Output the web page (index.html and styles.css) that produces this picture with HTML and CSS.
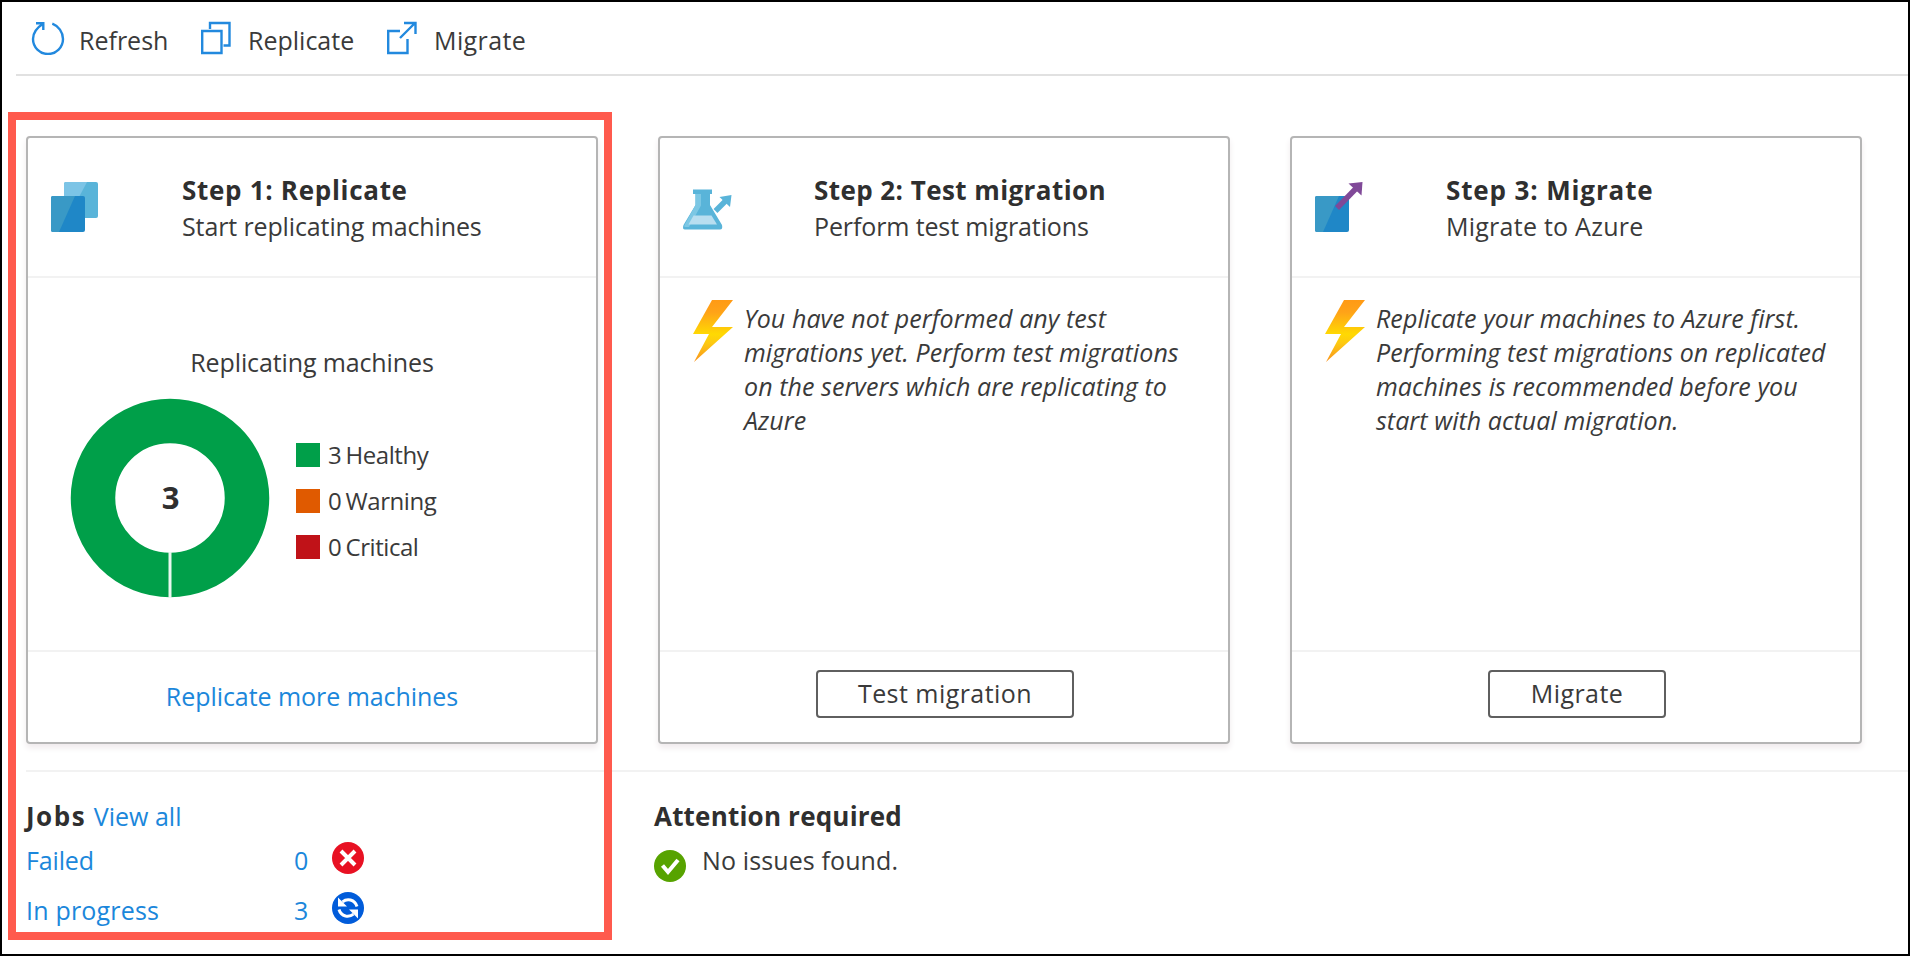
FILE: index.html
```html
<!DOCTYPE html>
<html lang="en">
<head>
<meta charset="utf-8">
<title>Migrate machines</title>
<link rel="stylesheet" href="styles.css">
</head>
<body>
<svg width="0" height="0" class="defs" aria-hidden="true">
  <defs>
    <linearGradient id="bolt-fill" x1="0" y1="0" x2="0" y2="1">
      <stop offset="0" stop-color="#ff9a15"/><stop offset=".2" stop-color="#ffa318"/>
      <stop offset=".55" stop-color="#ffd902"/><stop offset=".7" stop-color="#fdc912"/><stop offset="1" stop-color="#f9931e"/>
    </linearGradient>
    <symbol id="bolt" viewBox="0 0 40 62"><path fill="url(#bolt-fill)" d="M19 0H40L19 27H40L1 62L16 34H0Z"/></symbol>
  </defs>
</svg>
<div class="page">
  <header class="toolbar">
    <button class="tool tool-refresh"><svg class="tool-icon" width="34" height="34" viewBox="0 0 34 34"><path d="M12 2.800C5.500 7 2 12.500 2 18A15 15 0 0 0 32 18C32 11 27.500 5 21.300 2.600M5 2.200H12.300V9"/></svg><span>Refresh</span></button>
    <button class="tool tool-replicate"><svg class="tool-icon" width="30" height="34" viewBox="0 0 30 34"><path d="M1.200 10H20.500V32H1.200ZM9 8V2H28.500V24.500H22.500"/></svg><span>Replicate</span></button>
    <button class="tool tool-migrate"><svg class="tool-icon" width="30" height="34" viewBox="0 0 30 34"><path d="M13 10H1.200V32H20.500V18M13 17L28 2M17 2H28.500V13"/></svg><span>Migrate</span></button>
  </header>
  <main class="content">
    <div class="cards">
      <section class="card">
        <div class="card-head">
          <svg class="step-icon" width="50" height="60" viewBox="0 0 50 60"><rect x="14" y="5" width="34" height="36" rx="2" fill="#59b4d9"/><path fill="#7cc4e6" d="M16 5H37L28 22H14V7Q14 5 16 5Z"/><rect x="1" y="19" width="34" height="36" rx="2" fill="#1f87c7"/><path fill="#3999c6" d="M3 19H25L9 55H3Q1 55 1 53V21Q1 19 3 19Z"/></svg>
          <div><h2 class="title-replicate">Step 1: Replicate</h2><p class="sub-tight">Start replicating machines</p></div>
        </div>
        <div class="card-body chart">
          <p class="chart-title">Replicating machines</p>
          <div class="chart-row">
            <svg class="donut" width="200" height="200" viewBox="0 0 200 200"><circle cx="100" cy="100" r="77" fill="none" stroke="#009f49" stroke-width="44.500"/><path d="M100 154V200" stroke="#e9f7ef" stroke-width="3"/><text class="donut-value" x="100.500" y="111" text-anchor="middle">3</text></svg>
            <ul class="legend"><li><i class="ok"></i><span>3 Healthy</span></li><li><i class="warn"></i><span>0 Warning</span></li><li><i class="crit"></i><span>0 Critical</span></li></ul>
          </div>
        </div>
        <div class="card-foot"><a class="more">Replicate more machines</a></div>
      </section>
      <section class="card">
        <div class="card-head">
          <svg class="step-icon" width="50" height="60" viewBox="0 0 50 60"><path fill="#59b4d9" d="M11 12.500H30V17H28V28L40 48Q41 52.500 38 52.500H3Q0 52.500 1.500 48L13.500 28V17H11Z"/><path fill="#7cc7e4" d="M13.500 17H19V28.500L7 50H3Q1.500 50 2.500 48L13.500 28Z"/><path fill="#b8def0" d="M11.500 38.500H29.500L35 47.500H6.500Z"/><path stroke="#59b4d9" stroke-width="5.500" d="M33.500 34L44 23.500"/><path fill="#59b4d9" d="M37.500 20L49.500 18L48 30Z"/></svg>
          <div><h2 class="title-test">Step 2: Test migration</h2><p class="sub-tight">Perform test migrations</p></div>
        </div>
        <div class="card-body note"><svg class="bolt" width="40" height="62"><use href="#bolt"/></svg><p>You have not performed any test<br>migrations yet. Perform test migrations<br>on the servers which are replicating to<br>Azure</p></div>
        <div class="card-foot"><button class="action action-test">Test migration</button></div>
      </section>
      <section class="card">
        <div class="card-head">
          <svg class="step-icon" width="50" height="60" viewBox="0 0 50 60"><rect x="1" y="19" width="34" height="36" rx="2" fill="#1f87c7"/><path fill="#3999c6" d="M3 19H25L9 55H3Q1 55 1 53V21Q1 19 3 19Z"/><path stroke="#804998" stroke-width="5.500" d="M23 31L42 11.500"/><path fill="#804998" d="M34.500 6.500L48.500 5L47.500 18.500Z"/></svg>
          <div><h2 class="title-migrate">Step 3: Migrate</h2><p class="sub-loose">Migrate to Azure</p></div>
        </div>
        <div class="card-body note"><svg class="bolt" width="40" height="62"><use href="#bolt"/></svg><p>Replicate your machines to Azure first.<br>Performing test migrations on replicated<br>machines is recommended before you<br>start with actual migration.</p></div>
        <div class="card-foot"><button class="action action-migrate">Migrate</button></div>
      </section>
    </div>
    <div class="status">
      <section class="jobs">
        <h3 class="jobs-title"><span>Jobs</span> <a>View all</a></h3>
        <div class="job"><a class="failed">Failed</a><a>0</a><svg width="32" height="32" viewBox="0 0 32 32"><circle cx="16" cy="16" r="16" fill="#e81123"/><path d="M9 9L23 23M23 9L9 23" stroke="#fff" stroke-width="4"/></svg></div>
        <div class="job"><a class="in-progress">In progress</a><a>3</a><svg width="32" height="32" viewBox="0 0 32 32"><circle cx="16" cy="16" r="16" fill="#015cda"/><g id="half"><path fill="#fff" d="M6 5.500L15 14.500H6Z"/><path fill="none" stroke="#fff" stroke-width="3" d="M10.500 9.800Q14 7 18.500 8Q23.500 9.500 25 14.500"/></g><use href="#half" transform="rotate(180 16 16)"/></svg></div>
      </section>
      <section class="attention">
        <h3 class="attention-title">Attention required</h3>
        <div class="issue"><svg width="32" height="32" viewBox="0 0 32 32"><circle cx="16" cy="16" r="16" fill="#57a300"/><path d="M8.500 15.500L14 22L24 10" fill="none" stroke="#fff" stroke-width="4"/></svg><span>No issues found.</span></div>
      </section>
    </div>
  </main>
  <div class="highlight"></div>
</div>
</body>
</html>
```
FILE: styles.css
```css
* { box-sizing: border-box; }
body { margin: 0; font-family: "Open Sans", sans-serif; font-size: 25px; line-height: 36px; color: #3a3a3a; background: #fff; }
h2, h3, p, ul { margin: 0; padding: 0; font-size: 25px; font-weight: 400; }
h2, h3 { font-size: 26px; font-weight: 700; color: #2f2f2f; }
button { font: inherit; color: inherit; background: none; border: 0; padding: 0; white-space: nowrap; }
a { color: #1b87db; font-size: 25px; font-weight: 400; }
.defs { display: block; height: 0; }
.page { position: relative; width: 1910px; height: 956px; border: 2px solid #000; overflow: hidden; }
.toolbar { display: flex; height: 74px; margin-left: 14px; padding: 19px 0 0 15px; border-bottom: 2px solid #e1e1e1; }
.tool { display: flex; height: 40px; }
.tool-icon { flex: none; fill: none; stroke: #2289de; stroke-width: 2.4; }
.tool span { padding-top: 1px; }
.tool-refresh { width: 170px; gap: 14px; }
.tool-replicate { width: 186px; gap: 17px; }
.tool-migrate { gap: 17px; letter-spacing: .4px; }
.content { padding: 60px 0 0 24px; }
.cards { display: flex; gap: 60px; height: 608px; }
.card { display: flex; flex-direction: column; width: 572px; height: 608px; border: 2px solid #b5b5b5; border-radius: 4px; box-shadow: 0 4px 6px #f0ebed; }
.card-head { display: flex; height: 140px; padding: 34px 0 0 22px; gap: 82px; border-bottom: 2px solid #f2f2f2; white-space: nowrap; }
.step-icon { flex: none; margin-top: 5px; }
.title-replicate { letter-spacing: .7px; }
.title-test { letter-spacing: .43px; }
.title-migrate { letter-spacing: .87px; }
.sub-tight { letter-spacing: -.12px; }
.sub-loose { letter-spacing: .25px; }
.card-body { height: 374px; border-bottom: 2px solid #f2f2f2; }
.card-foot { display: flex; justify-content: center; align-items: flex-start; padding-top: 18px; }
.chart-title { padding: 66px 0 0; text-align: center; letter-spacing: -.12px; }
.chart-row { display: flex; padding: 18px 0 0 42px; gap: 26px; }
.donut { flex: none; }
.donut-value { font-size: 31px; font-weight: 700; fill: #2f2f2f; }
.legend { list-style: none; padding-top: 34px; font-size: 24px; letter-spacing: -.45px; word-spacing: -1.5px; }
.legend li { display: flex; align-items: center; gap: 8px; height: 46px; white-space: nowrap; }
.legend i { width: 24px; height: 24px; }
.ok { background: #009f49; } .warn { background: #e05a00; } .crit { background: #c01218; }
.more { margin-top: 8px; letter-spacing: -.05px; }
.note { display: flex; gap: 11px; padding: 22px 0 0 33px; font-style: italic; white-space: nowrap; }
.note p { line-height: 34px; padding-top: 1px; letter-spacing: .07px; }
.bolt { flex: none; }
.action { height: 48px; border: 2px solid #5f5f5f; border-radius: 4px; padding-bottom: 3px; margin-left: 2px; letter-spacing: .45px; }
.action-test { width: 258px; }
.action-migrate { width: 178px; }
.status { display: flex; margin-top: 26px; border-top: 2px solid #f2f2f2; padding-top: 26px; white-space: nowrap; }
.jobs { width: 628px; }
.jobs-title span { letter-spacing: 1.5px; }
.jobs-title a { margin-left: 1px; }
.attention-title { letter-spacing: .2px; }
.job { display: grid; grid-template-columns: 268px 38px 32px; height: 50px; padding-top: 8px; }
.failed { letter-spacing: -.15px; }
.in-progress { letter-spacing: .2px; }
.issue { display: flex; gap: 16px; letter-spacing: .12px; }
.issue svg { margin-top: 16px; } .issue span { margin-top: 8px; }
.highlight { position: absolute; left: 6px; top: 110px; width: 604px; height: 828px; border: 8px solid #ff5a4d; pointer-events: none; }
```
